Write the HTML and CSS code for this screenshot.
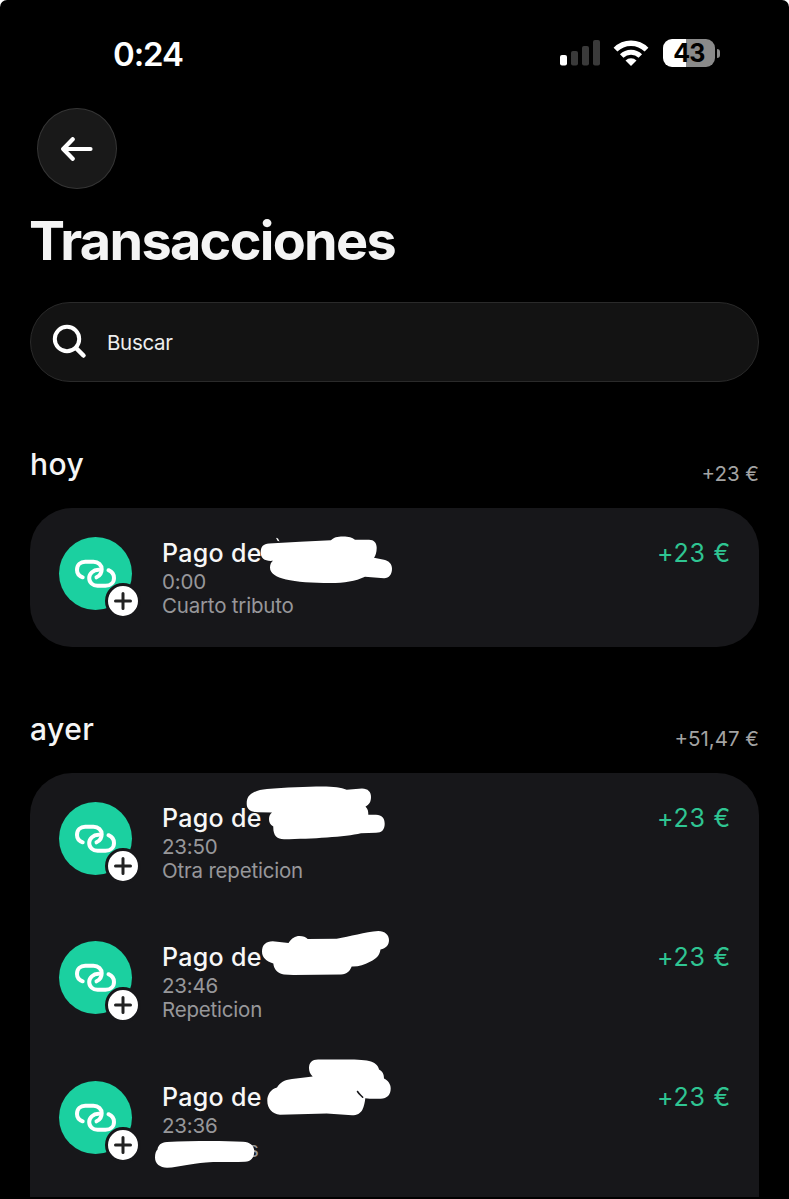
FILE: index.html
```html
<!DOCTYPE html>
<html lang="es">
<head>
  <meta charset="UTF-8">
  <meta name="viewport" content="width=device-width, initial-scale=1.0">
  <title>Transacciones</title>
  <link rel="stylesheet" href="styles.css">
</head>
<body>
  <svg class="defs" width="0" height="0">
    <symbol id="link" viewBox="0 0 73 73">
      <path d="M23.700 40.300C20 39 18 36.500 18 33C18 28 21.500 24.800 26.200 24.800H34.500C39.500 24.800 42.700 28.200 42.700 32.200C42.700 36 41.200 38.600 37.500 40.300"/>
      <path d="M39.500 32.800C34 33 30.200 36.800 30.200 41C30.200 45.600 33.800 48.800 38.500 48.800H46.500C51.500 48.800 55 45.600 55 41C55 37.300 53 34.700 49.500 33.200"/>
    </symbol>
    <symbol id="plus" viewBox="0 0 30 30">
      <path d="M15 7.500V22.500M7.500 15H22.500"/>
    </symbol>
  </svg>

  <div class="screen">
    <div class="status-bar">
      <span class="clock">0:24</span>
      <div class="status-icons">
        <svg width="40" height="26" viewBox="0 0 40 26">
          <rect x="0" y="15" width="7" height="10.500" rx="2" fill="#fff"/>
          <rect x="11" y="11" width="7" height="14.500" rx="2" fill="#3a3a3a"/>
          <rect x="22" y="6" width="7" height="19.500" rx="2" fill="#3a3a3a"/>
          <rect x="33" y="0" width="7" height="25.500" rx="2" fill="#3a3a3a"/>
        </svg>
        <svg class="wifi" width="36" height="27" viewBox="0 0 36 27">
          <path d="M2.500 9.700A22 22 0 0 1 33.500 9.700" stroke-width="5.400"/>
          <path d="M8.700 16A13.300 13.300 0 0 1 27.300 16" stroke-width="5"/>
          <path d="M18 26L12.500 20.500A7.800 7.800 0 0 1 23.500 20.500Z" fill="#fff" stroke="none"/>
        </svg>
        <div class="battery">
          <span class="battery-level">43</span>
          <span class="battery-cap"></span>
        </div>
      </div>
    </div>

    <button class="back-button" aria-label="Volver">
      <svg width="32" height="24" viewBox="0 0 32 24">
        <path d="M11.700 2.200L2.200 12L11.700 21.800M2.500 12H29.500"/>
      </svg>
    </button>

    <h1>Transacciones</h1>

    <div class="search">
      <svg width="36" height="36" viewBox="0 0 36 36">
        <circle cx="15" cy="15" r="12.200"/>
        <path d="M24 24L31.500 31.500" stroke-width="4.500"/>
      </svg>
      <span>Buscar</span>
    </div>

    <div class="day">
      <h2>hoy</h2>
      <span class="day-total">+23 €</span>
    </div>
    <div class="card">
      <div class="transaction">
        <div class="avatar">
          <svg class="link"><use href="#link"/></svg>
          <span class="badge"><svg><use href="#plus"/></svg></span>
        </div>
        <div class="info">
          <div class="name">Pago de</div>
          <div class="time">0:00</div>
          <div class="note">Cuarto tributo</div>
          <svg class="scribble" viewBox="162 537.5 240 73">
            <path d="M260.700 553C260.700 547 263.500 544.300 269 544L300 542.300L331 540.700C334 538 337 537 343 537C349 537 352 538 355 540.300L369 540.300C374 540.300 376.700 543.500 376.700 548.300C376.700 553 375.500 556 374 558.300L384 560.300C389 561.500 392 564.500 392 569.300C392 575 389 578.800 384 578.700L365 577.300C355 582 345 583.500 330 583.500C313 583.500 296 582.500 286 580C276 577.500 270 574 270 568C270 565 271 563 273 561.300C265 562 260.700 559 260.700 553Z"/>
            <path d="M276 538.300L278 539L279.500 542L277.500 541.300Z"/>
          </svg>
        </div>
        <div class="amount">+23 €</div>
      </div>
    </div>

    <div class="day">
      <h2>ayer</h2>
      <span class="day-total">+51,47 €</span>
    </div>
    <div class="card card-long">
      <div class="transaction">
        <div class="avatar">
          <svg class="link"><use href="#link"/></svg>
          <span class="badge"><svg><use href="#plus"/></svg></span>
        </div>
        <div class="info">
          <div class="name">Pago de</div>
          <div class="time">23:50</div>
          <div class="note">Otra repeticion</div>
          <svg class="scribble" viewBox="162 801.5 240 73">
            <path d="M246.700 803.300C246.700 797 249 794.500 252.500 792.500C257 790 261 789 267 788.500C285 787 307 786 322 786C334 786 341 787 346.700 789.300L362 788C368 788 371 791.500 371 796.500C371 801 369.500 804 365.500 806C368 808.500 368.300 811 368.300 814.300L376 814.300C382 814.300 384.700 818 384.700 823.300C384.700 829 382 832.300 376 832.300L361 832.700C345 836.500 312 838.200 284 838.700C277 838.700 273 835 273.300 826C270 824 269 821.500 269 818.500C269 815.500 270 813.500 272 812L258 811.700C250 811.700 246.700 808.500 246.700 803.300Z"/>
          </svg>
        </div>
        <div class="amount">+23 €</div>
      </div>

      <div class="transaction">
        <div class="avatar">
          <svg class="link"><use href="#link"/></svg>
          <span class="badge"><svg><use href="#plus"/></svg></span>
        </div>
        <div class="info">
          <div class="name">Pago de</div>
          <div class="time">23:46</div>
          <div class="note">Repeticion</div>
          <svg class="scribble" viewBox="162 941 240 73">
            <path d="M262 951.500C262 945 266 941.300 272.700 941.300L288.500 943C292 938 295 936 299.500 936C303 936 306 937 307.700 939L336.700 938.700C350 936.500 365 932 378.300 931C385 931 389 935 389 940C389 945 386 948.500 380.500 949.500C379.500 956 376 959 370 961.700C364 965 359 966.700 351.700 966.500C350 971 347 974 341 974.500L293.300 975L284 974.500C278 973.500 274 970 273.300 963.500C266 961 262 957.500 262 951.500Z"/>
          </svg>
        </div>
        <div class="amount">+23 €</div>
      </div>

      <div class="transaction">
        <div class="avatar">
          <svg class="link"><use href="#link"/></svg>
          <span class="badge"><svg><use href="#plus"/></svg></span>
        </div>
        <div class="info">
          <div class="name">Pago de</div>
          <div class="time">23:36</div>
          <div class="note note-hidden">s</div>
          <svg class="scribble" viewBox="162 1080.5 240 73">
            <path d="M309 1067.500C309 1062 312 1059 318 1059L345 1059C359 1059 366 1059.500 371 1061C376 1062.500 378.500 1066 379 1069C382.500 1071 384 1073.500 384 1078C388 1080 390.700 1083.500 390.700 1088C390.700 1094 387 1098.300 380.700 1098.300C374 1098.300 370 1098.500 365.300 1097.700C365 1101 364 1106 362.500 1109C360.500 1113 357 1114.800 352 1114.800L326.700 1113L280 1114.300C272 1113.500 267.300 1108 267.300 1100C267.300 1094 271 1088.500 277 1087C280 1082 284 1079.500 292 1078.500L312.700 1076C310 1073.500 309 1070.500 309 1067.500Z"/>
            <path d="M155 1157C155 1153 156 1150.500 157.500 1149C158 1145 161 1141.700 167 1141.500C190 1140.500 220 1140 243 1141.300C250 1141.500 254.300 1145.500 254.300 1150.500C254.300 1157 251 1161 245 1161.300C230 1161.800 215 1161 206 1162C190 1163 180 1166.500 167 1167.300C160 1167.300 155 1163 155 1157Z"/>
            <path class="gap" d="M357.500 1091C359 1093.500 360.500 1094.500 362.700 1096.800"/>
          </svg>
        </div>
        <div class="amount">+23 €</div>
      </div>
    </div>
  </div>
</body>
</html>
```
FILE: styles.css
```css
* {
  box-sizing: border-box;
}

body {
  margin: 0;
  background: #fff;
  font-family: Inter, "Liberation Sans", sans-serif;
}

svg {
  display: block;
  fill: none;
  stroke-linecap: round;
  stroke-linejoin: round;
}

.defs {
  position: absolute;
}

.screen {
  width: 789px;
  height: 1199px;
  padding: 0 30px;
  background: #000;
  border-bottom: 2px solid #000;
  border-radius: 7px 7px 0 0;
  overflow: hidden;
}

.status-bar {
  display: flex;
  justify-content: space-between;
  align-items: center;
  height: 108px;
  padding: 0 39px 0 83px;
}

.clock {
  color: #fff;
  font-size: 33px;
  font-weight: 600;
  letter-spacing: -1.1px;
}

.status-icons {
  display: flex;
  align-items: center;
  margin-top: -2px;
}

.wifi {
  margin: 0 14px 0 13px;
  stroke: #fff;
  stroke-linecap: butt;
}

.battery {
  display: flex;
  align-items: center;
  gap: 2px;
}

.battery-level {
  width: 52px;
  height: 28px;
  border-radius: 9px;
  background: linear-gradient(to right, #fff 44%, #8a8a8a 44%);
  color: #000;
  font-size: 25px;
  font-weight: 700;
  letter-spacing: -0.8px;
  line-height: 28px;
  text-align: center;
}

.battery-cap {
  width: 3px;
  height: 9px;
  border-radius: 0 3px 3px 0;
  background: #8a8a8a;
}

.back-button {
  display: flex;
  align-items: center;
  justify-content: center;
  width: 80px;
  height: 81px;
  margin-left: 7px;
  padding: 0;
  background: #191919;
  border: 1.5px solid #353535;
  border-radius: 50%;
}

.back-button svg {
  stroke: #fff;
  stroke-width: 4.2;
}

h1 {
  margin: 20px 0 0 -1px;
  color: #f4f4f4;
  font-size: 54px;
  font-weight: 700;
  letter-spacing: -1.7px;
  line-height: 64px;
}

.search {
  display: flex;
  align-items: center;
  gap: 19px;
  height: 80px;
  margin-top: 29px;
  padding-left: 21px;
  background: #131313;
  border: 1.5px solid #2a2a2a;
  border-radius: 41px;
  color: #eee;
  font-size: 20.5px;
  letter-spacing: -0.3px;
}

.search svg {
  stroke: #fff;
  stroke-width: 4;
}

.day {
  display: flex;
  justify-content: space-between;
  align-items: flex-end;
  height: 126px;
  padding-bottom: 21px;
}

h2 {
  margin: 0 0 4px;
  color: #f5f5f5;
  font-size: 30px;
  font-weight: 450;
  letter-spacing: 0.5px;
  line-height: 38px;
}

.day-total {
  color: #a3a3a3;
  font-size: 20.5px;
  line-height: 26px;
}

.card {
  height: 138.5px;
  padding: 29px;
  background: #17171a;
  border-radius: 42px;
}

.card-long {
  height: 500px;
}

.transaction {
  display: flex;
  height: 139.5px;
}

.avatar {
  position: relative;
  width: 73px;
  height: 73px;
  margin-right: 30px;
  background: #1bd0a0;
  border-radius: 50%;
}

.link {
  width: 73px;
  height: 73px;
  stroke: #fff;
  stroke-width: 4;
}

.badge {
  position: absolute;
  right: -9px;
  bottom: -9px;
  width: 36px;
  height: 36px;
  background: #fff;
  border: 3px solid #17171a;
  border-radius: 50%;
}

.badge svg {
  width: 30px;
  height: 30px;
  stroke: #222;
  stroke-width: 3;
}

.info {
  position: relative;
  flex: 1;
}

.name {
  color: #f7f7f7;
  font-size: 25px;
  font-weight: 500;
  letter-spacing: 0.3px;
  line-height: 32px;
}

.time,
.note {
  position: relative;
  top: 1px;
  color: #97979a;
  font-size: 20.5px;
  letter-spacing: -0.2px;
  line-height: 24px;
}

.note-hidden {
  padding-left: 86px;
}

.scribble {
  position: absolute;
  top: 0;
  left: 0;
  width: 240px;
  height: 73px;
  overflow: visible;
  fill: #fff;
}

.gap {
  fill: none;
  stroke: #17171a;
  stroke-width: 1.5;
}

.amount {
  margin-right: -1px;
  color: #2fc592;
  font-size: 25px;
  letter-spacing: 0.8px;
  line-height: 32px;
}
```
